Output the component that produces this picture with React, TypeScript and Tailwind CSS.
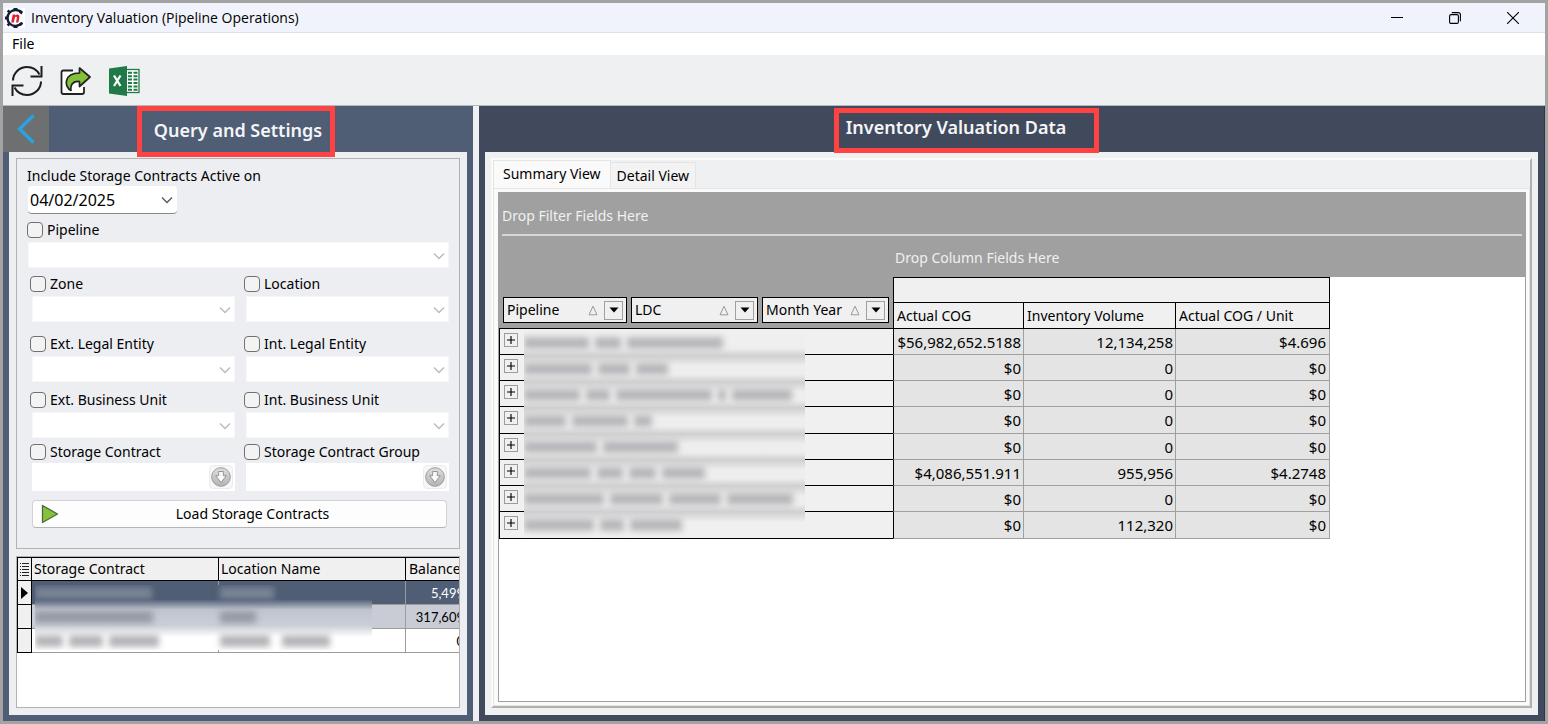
import { useState } from "react";

const contractRows = [
  { balance: "5,499", selected: true },
  { balance: "317,609", selected: false },
  { balance: "0", selected: false },
];

const pivotRows = [
  { cog: "$56,982,652.5188", volume: "12,134,258", unit: "$4.696", words: [65, 26, 96] },
  { cog: "$0", volume: "0", unit: "$0", words: [68, 32, 32] },
  { cog: "$0", volume: "0", unit: "$0", words: [56, 24, 96, 8, 60] },
  { cog: "$0", volume: "0", unit: "$0", words: [42, 56, 18] },
  { cog: "$0", volume: "0", unit: "$0", words: [73, 75] },
  { cog: "$4,086,551.911", volume: "955,956", unit: "$4.2748", words: [67, 26, 27, 43] },
  { cog: "$0", volume: "0", unit: "$0", words: [80, 53, 52, 66] },
  { cog: "$0", volume: "112,320", unit: "$0", words: [70, 24, 52] },
];

function Chevron({ className }: { className: string }) {
  return (
    <svg viewBox="0 0 12 12" className={className} fill="none" stroke="currentColor" strokeWidth="1.3">
      <path d="M1 3.5 6 8.5 11 3.5" />
    </svg>
  );
}

function Check({ id, label }: { id: string; label: string }) {
  return (
    <div className="flex h-4 items-center gap-1">
      <input
        id={id}
        type="checkbox"
        className="size-4 appearance-none rounded border border-[#707070] bg-[#f3f3f3] checked:bg-[#4f5d75]"
      />
      <label htmlFor={id} className="leading-4 whitespace-nowrap">
        {label}
      </label>
    </div>
  );
}

function Drop({ label }: { label: string }) {
  return (
    <div className="relative">
      <select
        aria-label={label}
        disabled
        className="block h-[26px] w-full appearance-none border border-[#f7f7f9] bg-white"
      />
      <Chevron className="pointer-events-none absolute top-2 right-1 size-3 text-[#b9b9b9]" />
    </div>
  );
}

function CheckedDrop({ id, label }: { id: string; label: string }) {
  return (
    <div className="flex flex-col gap-1">
      <Check id={id} label={label} />
      <div className="pl-0.5">
        <Drop label={label} />
      </div>
    </div>
  );
}

function Lookup({ id, label }: { id: string; label: string }) {
  return (
    <div className="flex flex-col gap-[3px]">
      <Check id={id} label={label} />
      <div className="ml-0.5 flex h-7 items-center bg-white pr-0.5">
        <input aria-label={label} disabled className="h-full min-w-0 flex-1 bg-white px-1" />
        <button
          aria-label={`Choose ${label}`}
          className="flex h-6 w-6 items-center justify-center rounded border border-[#ececec] bg-[#f7f7f7]"
        >
          <svg viewBox="0 0 20 20" className="size-5">
            <defs>
              <linearGradient id={`${id}-g`} x1="0" y1="0" x2="0" y2="1">
                <stop offset="0" stopColor="#dedede" />
                <stop offset="1" stopColor="#b4b4b4" />
              </linearGradient>
            </defs>
            <circle cx="10" cy="10" r="9.3" fill={`url(#${id}-g)`} stroke="#9b9b9b" />
            <path
              d="M7.7 4.5h4.6v4.2h3L10 15.6 4.7 8.7h3z"
              fill="#fafafa"
              stroke="#8d8d8d"
              strokeWidth="0.9"
              strokeLinejoin="round"
            />
          </svg>
        </button>
      </div>
    </div>
  );
}

function FieldButton({ label, width }: { label: string; width: string }) {
  return (
    <div className={`${width} flex h-[26px] items-center border border-black bg-[#f0f0f0] px-[3px] font-normal`}>
      <span className="flex-1 text-left whitespace-nowrap">{label}</span>
      <svg viewBox="0 0 10 11" className="mr-1.5 h-[11px] w-2.5" fill="none" stroke="#9a9a9a">
        <path d="M5 1.2 1 9.8h8z" />
      </svg>
      <button
        aria-label={`Filter ${label}`}
        className="flex size-[19px] items-center justify-center border border-[#a0a0a0] bg-[#f0f0f0]"
      >
        <svg viewBox="0 0 10 6" className="h-1.5 w-2.5">
          <path d="M0.5 0.5h9L5 5.5z" fill="#000" />
        </svg>
      </button>
    </div>
  );
}

function Smudges({ words, color }: { words: number[]; color: string }) {
  return (
    <>
      {words.map((w, i) => (
        <span key={i} className={`${color} h-3 shrink-0 blur-[3px]`} style={{ width: w }} />
      ))}
    </>
  );
}

export default function App() {
  const [date, setDate] = useState("04/02/2025");

  return (
    <div className="flex min-h-screen flex-col border-[3px] border-[#a3a3a3] bg-[#eff0f2] font-['Noto_Sans','Open_Sans',sans-serif] text-sm text-black">
      <header className="flex h-[30px] items-center border-b border-[#dfe0e2] bg-[#f0f3fb]">
        <svg viewBox="0 0 20 20" className="ml-[2px] size-5">
          <rect width="20" height="20" fill="#fff" />
          <path d="M16.400 4.600A8 8 0 1 0 16.400 15.400" fill="none" stroke="#141c33" strokeWidth="2.400" />
          <path
            d="M8.500 0h4v2.400h-4zM15 1.400l3 2.400-1.400 2.800-2.600-2zM3.600 1.600l2 1.800-1.800 1.800-2-1.800zM0 8.400h2.400v3.200H0zM1.600 16.400l2.200-2 1.800 1.800-2 2.200zM8.500 17.600h4V20h-4zM14.400 15.600l2.400-1.800 1.400 2-2.600 2.400z"
            fill="#141c33"
          />
          <path
            d="M6.200 14.600 7.700 6.600h2.400l-.2 1c1.800-1.800 5-1.400 4.500 1.600l-1 5.400H11l.9-4.800c.2-1.600-1.800-1.400-2.200.4l-.9 4.400z"
            fill="#e0202c"
          />
        </svg>
        <h1 className="ml-[6px] flex-1 font-['Open_Sans','Noto_Sans',sans-serif] text-sm leading-5">
          Inventory Valuation (Pipeline Operations)
        </h1>
        <div className="flex h-full">
          <button aria-label="Minimize" className="flex w-[58px] items-center justify-center">
            <svg viewBox="0 0 12 12" className="size-3" stroke="#000">
              <path d="M0 5.5h12" />
            </svg>
          </button>
          <button aria-label="Restore" className="flex w-[58px] items-center justify-center">
            <svg viewBox="0 0 12 12" className="size-3" fill="none" stroke="#000" strokeWidth="1.1">
              <rect x="0.6" y="2.6" width="8.8" height="8.8" rx="1.4" />
              <path d="M2.8.6H9.4a2 2 0 0 1 2 2V9.2" />
            </svg>
          </button>
          <button aria-label="Close" className="mr-[3px] flex w-[58px] items-center justify-center">
            <svg viewBox="0 0 12 12" className="size-3" stroke="#000" strokeWidth="1.1">
              <path d="M0 0 12 12M12 0 0 12" />
            </svg>
          </button>
        </div>
      </header>

      <nav className="flex h-[22px] items-center bg-white">
        <button className="px-[9px] text-sm leading-5">File</button>
      </nav>

      <div className="flex h-[51px] items-center gap-4 border-b border-[#b4b7bc] bg-[#eff0f2] pt-0.5 pl-2">
        <button aria-label="Refresh">
          <svg viewBox="0 0 32 32" className="size-8" fill="none" stroke="#1d1d1d" strokeWidth="2">
            <path d="M2 15.500C2 8 8.500 2 16 2c5.500 0 10 3 12.500 7.500" />
            <path d="M30.500 1v10.500H19.500" />
            <path d="M30 16.500C30 24 23.500 30 16 30c-5.500 0-10-3-12.500-7.500" />
            <path d="M1.500 31V20.500H12.500" />
          </svg>
        </button>
        <button aria-label="Export">
          <svg viewBox="0 0 32 32" className="size-8">
            <path
              d="M14 5.500H4.500Q2.500 5.500 2.500 7.500V27Q2.500 29 4.500 29H23Q25 29 25 27V22"
              fill="#fff"
              stroke="#222"
              strokeWidth="1.800"
            />
            <path
              d="M20.500 3 31 12 20.500 21.500V16.500C14 16 11 19.500 12 25.500 5 22 4.500 8 20.500 8Z"
              fill="#84c13a"
              stroke="#222"
              strokeWidth="1.700"
              strokeLinejoin="round"
            />
          </svg>
        </button>
        <button aria-label="Export to Excel" className="pl-[2px]">
          <svg viewBox="0 0 32 32" className="size-8">
            <rect x="17" y="4.500" width="13" height="23" fill="#fff" stroke="#1f7a47" strokeWidth="1.300" />
            <path
              d="M19 6.800h4v2h-4zM24.500 6.800h4v2h-4zM19 10.200h4v2h-4zM24.500 10.200h4v2h-4zM19 13.600h4v2h-4zM24.500 13.600h4v2h-4zM19 17h4v2h-4zM24.500 17h4v2h-4zM19 20.400h4v2h-4zM24.500 20.400h4v2h-4zM19 23.800h4v2h-4zM24.500 23.800h4v2h-4z"
              fill="#1f7a47"
            />
            <path d="M0 3.500 18 1v30L0 28.500z" fill="#1f7a47" />
            <path d="M5 10.500 11.500 21M11.500 10.500 5 21" stroke="#fff" strokeWidth="2.300" />
          </svg>
        </button>
      </div>

      <main className="flex flex-1 gap-1.5">
        <section className="flex w-[470px] shrink-0 flex-col bg-[#4f5d75]">
          <div className="relative flex h-[46px] items-center justify-center pt-0.5">
            <button
              aria-label="Collapse panel"
              className="absolute inset-y-0 left-0 flex w-[46px] items-center justify-center bg-[#6e6f71]"
            >
              <svg viewBox="0 0 18 30" className="h-[30px] w-[18px]" fill="none" stroke="#29a3e0" strokeWidth="3.5">
                <path d="M16.5 1.5 2.5 15 16.5 28.5" />
              </svg>
            </button>
            <h2 className="relative text-lg leading-6 font-semibold text-[#f4f5f7]">
              Query and Settings
              <span className="pointer-events-none absolute -top-3 -right-[13px] -bottom-[15px] -left-[17px] z-10 border-[5px] border-[#ff4343]" />
            </h2>
          </div>

          <div className="mx-1.5 mb-1.5 flex flex-1 flex-col gap-[7px] bg-[#edeef2] p-[7px] pt-1.5">
            <div className="flex flex-col border border-[#b2b2b2] px-2.5 pt-[7px] pb-5">
              <label htmlFor="active-on" className="leading-5">
                Include Storage Contracts Active on
              </label>
              <div className="ml-px flex h-7 w-[149px] items-center rounded-sm border-b border-[#8a8a8a] bg-white pr-1">
                <input
                  id="active-on"
                  value={date}
                  onChange={(e) => setDate(e.target.value)}
                  className="h-6 min-w-0 flex-1 bg-transparent pl-0.5 text-base leading-6"
                />
                <Chevron className="size-3 text-[#555]" />
              </div>

              <div className="mt-2 flex flex-col gap-1">
                <Check id="pipeline" label="Pipeline" />
                <div className="pl-px">
                  <Drop label="Pipeline" />
                </div>
              </div>

              <div className="mt-2 flex flex-col pl-[3px]">
                <div className="grid grid-cols-2 gap-[9px]">
                  <CheckedDrop id="zone" label="Zone" />
                  <CheckedDrop id="location" label="Location" />
                </div>
                <div className="mt-3.5 grid grid-cols-2 gap-[9px]">
                  <CheckedDrop id="ext-legal" label="Ext. Legal Entity" />
                  <CheckedDrop id="int-legal" label="Int. Legal Entity" />
                </div>
                <div className="mt-2.5 grid grid-cols-2 gap-[9px]">
                  <CheckedDrop id="ext-unit" label="Ext. Business Unit" />
                  <CheckedDrop id="int-unit" label="Int. Business Unit" />
                </div>
                <div className="mt-1.5 grid grid-cols-2 gap-[9px]">
                  <Lookup id="contract" label="Storage Contract" />
                  <Lookup id="contract-group" label="Storage Contract Group" />
                </div>
                <button className="mt-[9px] mr-0.5 ml-0.5 flex h-7 items-center rounded border border-[#d2d2d4] border-b-[#b5b5b5] bg-[#fdfdfd] pl-2">
                  <svg viewBox="0 0 18 20" className="h-5 w-[18px]">
                    <path
                      d="M1.5 1.5 16.5 10 1.5 18.5z"
                      fill="#86c13c"
                      stroke="#4d6a3a"
                      strokeWidth="1.3"
                      strokeLinejoin="round"
                    />
                  </svg>
                  <span className="flex-1 text-center leading-5">Load Storage Contracts</span>
                </button>
              </div>
            </div>

            <div className="relative flex-1 overflow-hidden border border-[#b2b2b2] bg-white">
              <table className="w-[450px] table-fixed border-separate border-spacing-0">
                <thead>
                  <tr className="h-6 bg-[#f0f0f0] text-left">
                    <th className="w-[15px] border border-black p-0">
                      <svg viewBox="0 0 9 13" className="mx-auto h-[13px] w-[9px]" stroke="#222">
                        <path d="M2 .5h7M2 3.5h7M2 6.5h7M2 9.5h7M2 12.5h7" />
                        <path d="M0 .5h1M0 3.5h1M0 6.5h1M0 9.5h1M0 12.5h1" />
                      </svg>
                    </th>
                    <th className="w-[187px] border-y border-r border-black p-0 pl-0.5 leading-5 font-normal">
                      Storage Contract
                    </th>
                    <th className="w-[187px] border-y border-r border-black p-0 pl-0.5 leading-5 font-normal">
                      Location Name
                    </th>
                    <th className="border-y border-black p-0 pl-[3px] leading-5 font-normal">Balance</th>
                  </tr>
                </thead>
                <tbody>
                  {contractRows.map((row) => (
                    <tr
                      key={row.balance}
                      className={
                        row.selected
                          ? "h-6 bg-[#4f5d75] text-white"
                          : "h-6 odd:bg-white even:bg-[#c9ccd5]"
                      }
                    >
                      <td className="border-x border-b border-black bg-[#f0f0f0] p-0">
                        {row.selected && (
                          <svg viewBox="0 0 7 12" className="mx-auto h-3 w-[7px]">
                            <path d="M0 0 7 6 0 12z" fill="#000" />
                          </svg>
                        )}
                      </td>
                      <td className="border-r border-b border-[#9c9c9c] p-0" />
                      <td className="border-r border-b border-[#9c9c9c] p-0" />
                      <td className="border-b border-[#9c9c9c] p-0 text-right font-['Lato','Noto_Sans',sans-serif] text-[13px] leading-5">
                        <span className="pr-[3px]">{row.balance}</span>
                      </td>
                    </tr>
                  ))}
                </tbody>
              </table>
              <div
                aria-hidden="true"
                className="absolute top-7 left-[18px] flex h-[65px] w-[337px] flex-col overflow-hidden bg-[linear-gradient(180deg,#4f5d75_0%,#4f5d75_22%,#bfc4ce_38%,#cbced6_62%,#ffffff_80%)]"
              >
                <div className="flex h-4 items-center">
                  <div className="flex w-[185px]"><Smudges words={[117]} color="bg-[#7a8495]" /></div>
                  <Smudges words={[54]} color="bg-[#7a8495]" />
                </div>
                <div className="flex h-8 items-center">
                  <div className="flex w-[185px]"><Smudges words={[118]} color="bg-[#969ba4]" /></div>
                  <Smudges words={[36]} color="bg-[#969ba4]" />
                </div>
                <div className="flex h-4 items-center">
                  <div className="flex w-[185px] gap-1.5"><Smudges words={[28, 34, 50]} color="bg-[#b5b4b8]" /></div>
                  <div className="flex gap-3"><Smudges words={[50, 48]} color="bg-[#b5b4b8]" /></div>
                </div>
              </div>
            </div>
          </div>
        </section>

        <section className="flex min-w-0 flex-1 flex-col border-r border-[#2b3546] bg-[#404a5c]">
          <div className="flex h-[46px] items-start justify-center pt-[9px] pr-[111px]">
            <h2 className="relative text-lg leading-6 font-semibold text-[#f4f5f7]">
              Inventory Valuation Data
              <span className="pointer-events-none absolute -top-[7px] -right-[33px] -bottom-3.5 -left-3 z-10 border-[5px] border-[#ff4343]" />
            </h2>
          </div>

          <div className="mx-1.5 mb-1.5 flex flex-1 bg-[#eff0f2] p-1.5 pb-[7px]">
            <div className="flex min-w-0 flex-1 flex-col border-2 border-t-[#fafafa] border-r-[#b0b0b0] border-b-[#b0b0b0] border-l-[#fafafa]">
              <div role="tablist" className="flex h-7 items-end">
                <button
                  role="tab"
                  aria-selected="true"
                  className="h-7 border-x border-t border-[#e4e4e4] bg-[#fafafa] px-[9px] pb-0.5 leading-5"
                >
                  Summary View
                </button>
                <button
                  role="tab"
                  aria-selected="false"
                  className="h-[26px] border-t border-r border-[#e4e4e4] bg-[#f3f3f3] px-1.5 leading-5"
                >
                  Detail View
                </button>
              </div>

              <div className="flex flex-1 border border-[#e4e4e4] bg-[#fafafa] p-[3px] pl-1">
                <div className="min-w-0 flex-1 border border-[#a0a0a0] bg-white">
                  <div className="flex h-[84px] flex-col bg-[#a0a0a0] px-[3px] text-[#f0f0f0]">
                    <p className="border-b-2 border-[#d6d6d6] pt-[13px] pb-2 leading-5">Drop Filter Fields Here</p>
                    <p className="pt-3 pl-[393px] leading-5">Drop Column Fields Here</p>
                  </div>

                  <div className="relative">
                    <table className="w-[831px] table-fixed border-separate border-spacing-0">
                      <colgroup>
                        <col className="w-[394px]" />
                        <col className="w-[131px]" />
                        <col className="w-[152px]" />
                        <col className="w-[154px]" />
                      </colgroup>
                      <thead>
                        <tr>
                          <th rowSpan={2} className="border-b border-black bg-[#a0a0a0] p-0 pt-5 pl-1 align-top">
                            <div className="flex gap-1">
                              <FieldButton label="Pipeline" width="w-[124px]" />
                              <FieldButton label="LDC" width="w-[127px]" />
                              <FieldButton label="Month Year" width="w-[127px]" />
                            </div>
                          </th>
                          <th colSpan={3} className="h-[26px] border border-black bg-[#f0f0f0] p-0" />
                        </tr>
                        <tr className="h-[26px] bg-[#f0f0f0] text-left">
                          <th className="border-x border-b border-black p-0 pl-[3px] leading-5 font-normal">Actual COG</th>
                          <th className="border-r border-b border-black p-0 pl-[3px] leading-5 font-normal">
                            Inventory Volume
                          </th>
                          <th className="border-r border-b border-black p-0 pl-[3px] leading-5 font-normal">
                            Actual COG / Unit
                          </th>
                        </tr>
                      </thead>
                      <tbody className="text-[15px] [&>tr:nth-child(4n)]:h-[27px]">
                        {pivotRows.map((row, i) => (
                          <tr key={i} className="h-[26px] bg-[#e4e4e4] text-right">
                            <th className="border-b border-l border-black bg-[#f0f0f0] p-0 pl-1 align-top">
                              <button
                                aria-label="Expand row"
                                className="mt-1 flex size-3.5 items-center justify-center border border-[#9c9c9c]"
                              >
                                <svg viewBox="0 0 7 7" className="size-2" stroke="#000">
                                  <path d="M0 3.5h7M3.5 0v7" />
                                </svg>
                              </button>
                            </th>
                            <td className="border-r border-b border-l border-[#a0a0a0] border-l-black p-0 pr-0.5 leading-5">
                              {row.cog}
                            </td>
                            <td className="border-r border-b border-[#a0a0a0] p-0 pr-0.5 leading-5">{row.volume}</td>
                            <td className="border-r border-b border-[#a0a0a0] p-0 pr-[3px] leading-5">{row.unit}</td>
                          </tr>
                        ))}
                      </tbody>
                    </table>
                    <div
                      aria-hidden="true"
                      className="absolute bottom-px left-[25px] flex w-[281px] flex-col overflow-hidden"
                    >
                      {pivotRows.map((row, i) => (
                        <div
                          key={i}
                          className="flex h-[26px] items-center gap-1.5 bg-[linear-gradient(180deg,#d0d0d0_0%,#eeeeee_38%,#eeeeee_70%,#d0d0d0_100%)] first:bg-[linear-gradient(180deg,#f0f0f0_0%,#eeeeee_70%,#d0d0d0_100%)] last:bg-[linear-gradient(180deg,#d0d0d0_0%,#f0f0f0_40%)]"
                        >
                          <Smudges words={row.words} color="bg-[#b8b6ba]" />
                        </div>
                      ))}
                    </div>
                  </div>
                </div>
              </div>
            </div>
          </div>
        </section>
      </main>
    </div>
  );
}
